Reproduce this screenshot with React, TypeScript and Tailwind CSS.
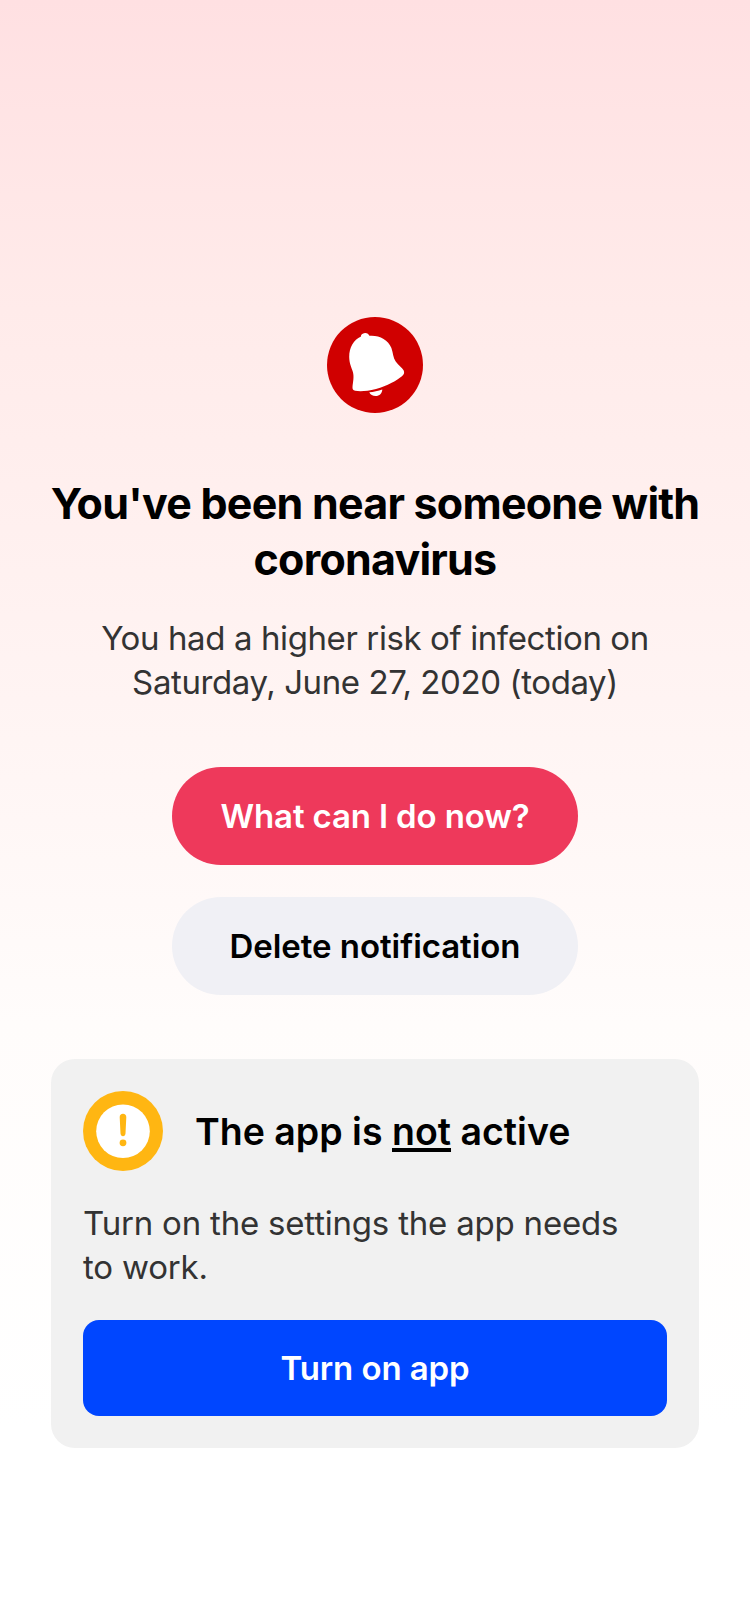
import React from "react";

function BellIcon() {
  return (
    <svg viewBox="0 0 96 96" className="size-24 shrink-0" aria-hidden="true">
      <circle cx="48" cy="48" r="48" fill="#d00000" />
      <path
        fill="#fff"
        d="M34 19.6C33.6 17.4 35.4 16.2 38 15.9C40.2 15.8 41.7 17.1 42.4 18.8C52 18 61 22.4 64.4 31C66.2 36 66 40.5 68.7 44.5C71.2 48.3 75 50.4 76.6 53.2C77.7 55.4 77.2 57.6 74.6 59.4C69.5 63.5 60.5 68.6 49 71.9C40 74.2 33 74.6 28.2 73.7C26 73.2 25.3 72 25.5 70C25.9 65.5 27.3 60 25.9 55C24.5 50.5 22.3 46.5 22.2 40C22.2 30.5 26.5 23 34 19.6Z"
      />
      <path fill="#fff" d="M42.3 75.2C46.5 74.9 51.3 73.9 55.3 72.4C55.2 76 52.5 79 48.6 79C45.8 79 43.3 77.7 42.3 75.2Z" />
    </svg>
  );
}

function WarningIcon() {
  return (
    <svg viewBox="0 0 80 80" className="size-20 shrink-0" aria-hidden="true">
      <circle cx="40" cy="40" r="40" fill="#ffb612" />
      <circle cx="40" cy="40.3" r="26.8" fill="#fff" />
      <path fill="#ffb612" d="M36.7 26.2C36.6 24.2 38 22.8 40 22.8S43.4 24.2 43.3 26.2L42.5 42.6C42.4 44.2 41.4 45.2 40 45.2S37.6 44.2 37.5 42.6Z" />
      <circle cx="40" cy="51.8" r="3.4" fill="#ffb612" />
    </svg>
  );
}

export default function App() {
  return (
    <main className="flex h-[1624px] w-[750px] flex-col items-center bg-[linear-gradient(to_bottom,#ffe0e2_0%,#ffebea_19%,#fff2f1_38%,#fffcfb_63%,#ffffff_88%)] px-[51px] pt-[317px] font-['Inter',sans-serif] text-black">
      <BellIcon />
      <h1 className="mt-[62px] text-center text-[43px] leading-[56px] font-bold tracking-[-0.77px] whitespace-nowrap">
        You've been near someone with
        <br />
        coronavirus
      </h1>
      <p className="mt-[29px] text-center text-[33px] leading-[44px] tracking-[-0.4px] whitespace-nowrap text-[#333]">
        You had a higher risk of infection on
        <br />
        Saturday, June 27, 2020 (today)
      </p>
      <button className="mt-[63px] h-[98px] w-[406px] shrink-0 rounded-full bg-[#ee395b] pt-0.5 text-[33px] font-semibold tracking-[-0.15px] text-white">
        What can I do now?
      </button>
      <button className="mt-8 h-[98px] w-[406px] shrink-0 rounded-full bg-[#f0f0f5] pt-0.5 text-[33px] font-semibold tracking-[-0.05px]">
        Delete notification
      </button>
      <section className="mt-16 flex h-[389px] w-full flex-col rounded-[24px] bg-[#f1f1f1] px-8 pt-8">
        <div className="flex items-center gap-8">
          <WarningIcon />
          <h2 className="pt-0.5 text-[37.5px] leading-[52px] font-semibold whitespace-nowrap">
            The app is <span className="underline decoration-4 underline-offset-3">not</span> active
          </h2>
        </div>
        <p className="mt-[30px] text-[33px] leading-[44px] tracking-[-0.2px] whitespace-nowrap text-[#333]">
          Turn on the settings the app needs
          <br />
          to work.
        </p>
        <button className="mt-[31px] h-24 w-full shrink-0 rounded-[16px] bg-[#0046ff] pt-0.5 text-[33px] font-semibold tracking-[-0.1px] text-white">
          Turn on app
        </button>
      </section>
    </main>
  );
}
